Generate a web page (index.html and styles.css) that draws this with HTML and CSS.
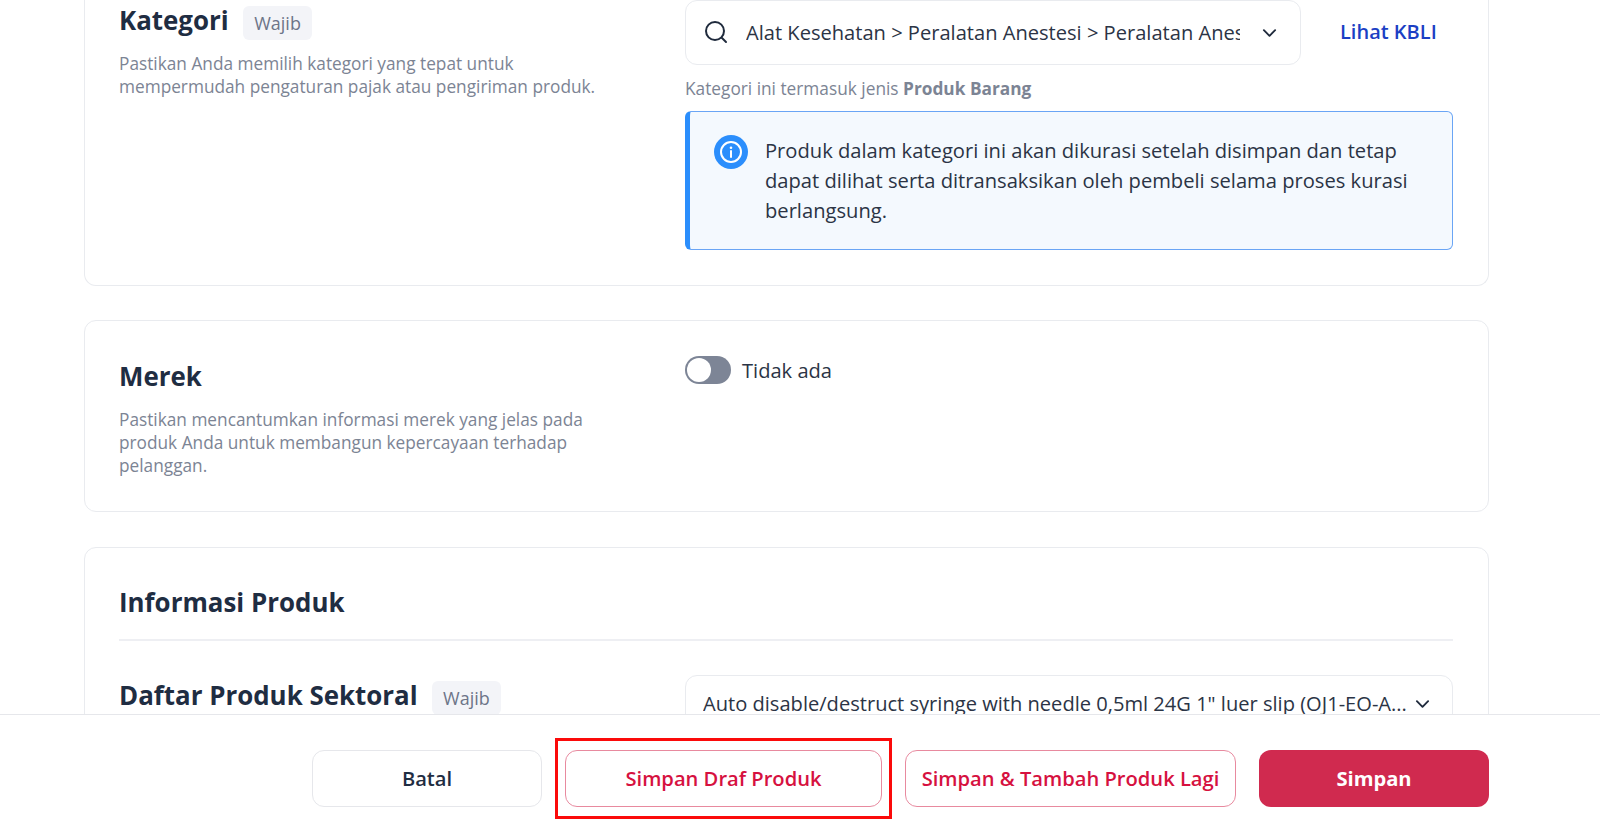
FILE: index.html
```html
<!DOCTYPE html>
<html lang="id">
<head>
<meta charset="utf-8">
<title>Tambah Produk</title>
<link rel="stylesheet" href="styles.css">
</head>
<body>
<main class="page">
  <section class="card card-kategori">
    <div class="side">
      <div class="title-row"><h2 class="title">Kategori</h2><span class="tag">Wajib</span></div>
      <p class="desc">Pastikan Anda memilih kategori yang tepat untuk<br>mempermudah pengaturan pajak atau pengiriman produk.</p>
    </div>
    <div class="field">
      <div class="select-row">
        <div class="select">
          <svg class="icon-search" viewBox="0 0 24 24" fill="none" stroke="#1f2a3c" stroke-width="2" stroke-linecap="round"><circle cx="11" cy="11" r="9"/><path d="M18 18l4 4"/></svg>
          <span class="select-text">Alat Kesehatan &gt; Peralatan Anestesi &gt; Peralatan Anestesi</span>
          <svg class="chev" viewBox="0 0 16 10" fill="none" stroke="#1f2a3c" stroke-width="2" stroke-linecap="round" stroke-linejoin="round"><path d="M2 2l6 6 6-6"/></svg>
        </div>
        <a class="link">Lihat KBLI</a>
      </div>
      <p class="hint">Kategori ini termasuk jenis <b>Produk Barang</b></p>
      <div class="notice">
        <svg class="icon-info" viewBox="0 0 34 34"><circle cx="17" cy="17" r="17" fill="#2b8efc"/><circle cx="17" cy="17" r="10" fill="none" stroke="#fff" stroke-width="2"/><circle cx="17" cy="12.8" r="1.3" fill="#fff"/><path d="M17 16v6" stroke="#fff" stroke-width="2" stroke-linecap="round"/></svg>
        <p class="notice-text">Produk dalam kategori ini akan dikurasi setelah disimpan dan tetap dapat dilihat serta ditransaksikan oleh pembeli selama proses kurasi berlangsung.</p>
      </div>
    </div>
  </section>

  <section class="card card-merek">
    <div class="side">
      <div class="title-row"><h2 class="title">Merek</h2></div>
      <p class="desc">Pastikan mencantumkan informasi merek yang jelas pada<br>produk Anda untuk membangun kepercayaan terhadap<br>pelanggan.</p>
    </div>
    <div class="field">
      <div class="toggle-row"><span class="toggle"></span><span class="toggle-label">Tidak ada</span></div>
    </div>
  </section>

  <section class="card card-info">
    <h2 class="title head">Informasi Produk</h2>
    <div class="sector">
      <div class="side">
        <div class="title-row"><h2 class="title">Daftar Produk Sektoral</h2><span class="tag">Wajib</span></div>
      </div>
      <div class="field">
        <div class="select select-plain">
          <span class="select-text">Auto disable/destruct syringe with needle 0,5ml 24G 1" luer slip (OJ1-EO-A...</span>
          <svg class="chev" viewBox="0 0 16 10" fill="none" stroke="#1f2a3c" stroke-width="2" stroke-linecap="round" stroke-linejoin="round"><path d="M2 2l6 6 6-6"/></svg>
        </div>
      </div>
    </div>
  </section>
</main>

<footer class="footer">
  <button class="btn btn-plain">Batal</button>
  <span class="highlight-wrap">
    <button class="btn btn-outline btn-draft">Simpan Draf Produk</button>
    <span class="highlight"></span>
  </span>
  <button class="btn btn-outline btn-more">Simpan &amp; Tambah Produk Lagi</button>
  <button class="btn btn-primary">Simpan</button>
</footer>
</body>
</html>
```
FILE: styles.css
```css
* { box-sizing: border-box; }
html, body { margin: 0; height: 100%; }
body {
  background: #fff;
  font-family: "Open Sans", "Noto Sans", sans-serif;
  color: #1f2a3c;
  overflow: hidden;
  display: flex;
  flex-direction: column;
  height: 840px;
}
h2, p { margin: 0; }

.page {
  height: 714px;
  overflow: hidden;
  padding: 0 111px 0 84px;
  display: flex;
  flex-direction: column;
  gap: 35px;
  flex: none;
}
.card {
  border: 1px solid #e9ebef;
  border-radius: 12px;
  padding: 0 35px 0 34px;
  display: grid;
  grid-template-columns: 566px 768px;
  flex: none;
}
.card-kategori { margin-top: -20px; height: 306px; padding-top: 20px; border-top: 0; border-radius: 0 0 12px 12px; }
.card-merek { height: 192px; margin-top: -1px; padding-top: 35px; }
.card-info { display: block; height: 300px; padding-top: 36px; }

.title-row { display: flex; align-items: center; gap: 14px; height: 40px; }
.title { font-size: 25.9px; font-weight: 700; color: #1f2d42; line-height: 36px; }
.tag {
  background: #f3f4f8;
  color: #6d7588;
  border-radius: 6px;
  font-size: 18px;
  height: 34px;
  line-height: 34px;
  padding: 0 11.5px;
  font-weight: 400;
  margin-top: 6px;
}
.desc { font-size: 17.25px; line-height: 23px; color: #7c8494; margin-top: 12px; }
.side { min-width: 0; }

.select-row { display: flex; align-items: center; gap: 40px; }
.select {
  display: flex;
  align-items: center;
  width: 616px;
  height: 65px;
  border: 1px solid #e9ebef;
  border-radius: 12px;
  padding: 0 23px 0 18px;
  font-size: 20.1px;
  color: #2b3445;
}
.icon-search { width: 24px; height: 24px; flex: none; margin-right: 18px; margin-top: -2px; }
.select-text { flex: 1; overflow: hidden; white-space: nowrap; min-width: 0; }
.chev { width: 15px; height: 10px; flex: none; margin-left: 22px; }
.link { color: #1b3fc4; font-size: 20px; font-weight: 600; margin: -2px 0 0 -1px; }
.hint { font-size: 17.28px; line-height: 24px; color: #7c8494; margin-top: 12px; }
.hint b { font-weight: 700; }
.notice {
  display: flex;
  gap: 17px;
  margin-top: 10px;
  height: 139px;
  padding: 24px 24px 0 24px;
  background: #f4f9fe;
  border: 1px solid #6aa5f5;
  border-left: 5px solid #2b8efc;
  border-radius: 6px;
}
.icon-info { width: 34px; height: 34px; flex: none; margin-top: -1px; }
.notice-text { font-size: 20.15px; line-height: 30px; color: #2b3445; margin-top: -1px; }

.toggle-row { display: flex; align-items: center; gap: 11px; height: 28px; }
.toggle {
  width: 46px;
  height: 28px;
  border-radius: 14px;
  background: #7d8596;
  position: relative;
}
.toggle::after {
  content: "";
  position: absolute;
  left: 2px;
  top: 2px;
  width: 24px;
  height: 24px;
  border-radius: 50%;
  background: #fff;
}
.toggle-label { font-size: 20.1px; color: #2b3445; }

.head { padding-bottom: 19px; border-bottom: 2px solid #eeeff3; line-height: 36px; }
.sector { display: grid; grid-template-columns: 566px 768px; padding-top: 34px; }
.select-plain { width: 768px; height: 57px; padding: 0 22px 0 17px; }
.select-plain .chev { margin-left: 5px; }

.footer {
  height: 126px;
  flex: none;
  background: #fff;
  border-top: 1px solid #e6e7eb;
  display: flex;
  justify-content: flex-end;
  align-items: flex-start;
  gap: 23px;
  padding: 35px 111px 0 0;
  position: relative;
}
.btn {
  height: 57px;
  border-radius: 12px;
  font-family: inherit;
  font-size: 20.15px;
  font-weight: 600;
  background: #fff;
  padding: 0 0 2px;
}
.btn-plain { width: 230px; border: 1px solid #e6e7eb; color: #1f2d42; }
.btn-outline { border: 1px solid #e88a9f; color: #d6113f; }
.btn-draft { width: 317px; display: block; }
.btn-more { width: 331px; }
.btn-primary { width: 230px; border: 0; background: #d02a4f; color: #fff; font-weight: 700; }
.highlight-wrap { position: relative; display: block; }
.highlight {
  position: absolute;
  left: -10px;
  right: -10px;
  top: -12px;
  bottom: -12px;
  border: 3px solid #fb0a0a;
}
```
